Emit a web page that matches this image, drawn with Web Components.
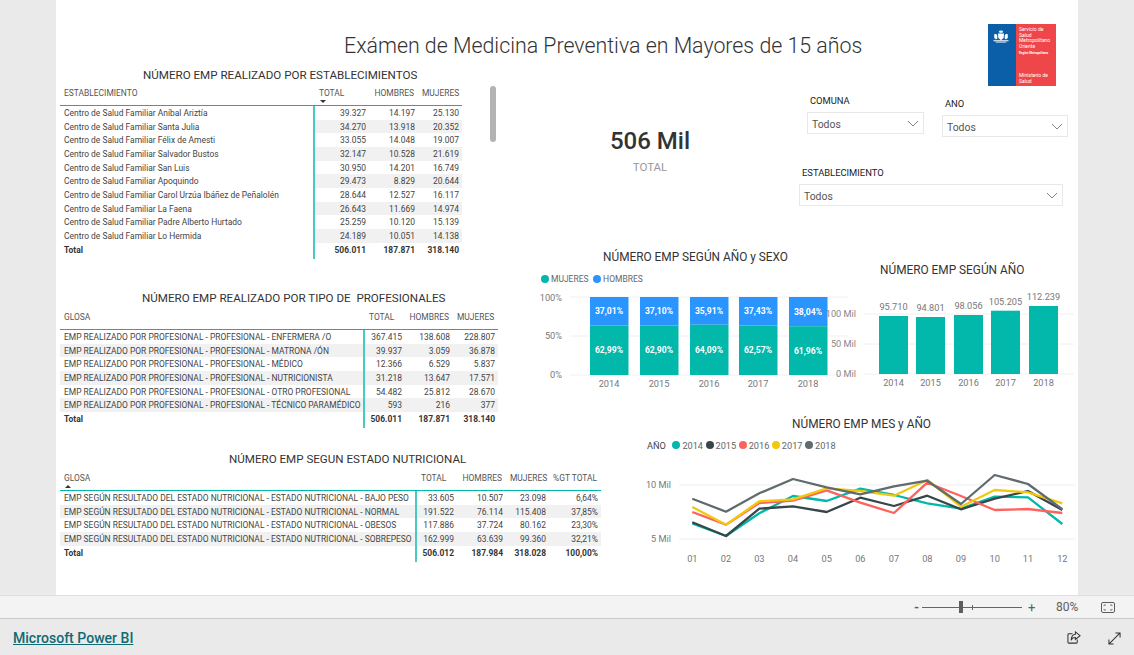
<!DOCTYPE html>
<html lang="es">
<head>
<meta charset="utf-8">
<title>Exámen de Medicina Preventiva</title>
<style>
  html, body { margin: 0; height: 100%; overflow: hidden; }
  body { font-family: Roboto, "Liberation Sans", sans-serif; }
</style>
</head>
<body>
<bi-app></bi-app>
<script>
const FONT = 'Roboto, "Liberation Sans", sans-serif';
const TEAL = "#01b8aa";

const TABLES = {
  estab: {
    cols: "255px 54px 49px 44px",
    stripeFrom: 1,
    head: ["ESTABLECIMIENTO", "TOTAL", "HOMBRES", "MUJERES"],
    headPad: [0, 23, 1, 4],
    sort: { col: 1, dir: "down" },
    rows: [
      ["Centro de Salud Familiar Aníbal Ariztía", "39.327", "14.197", "25.130"],
      ["Centro de Salud Familiar Santa Julia", "34.270", "13.918", "20.352"],
      ["Centro de Salud Familiar Félix de Amesti", "33.055", "14.048", "19.007"],
      ["Centro de Salud Familiar Salvador Bustos", "32.147", "10.528", "21.619"],
      ["Centro de Salud Familiar San Luis", "30.950", "14.201", "16.749"],
      ["Centro de Salud Familiar Apoquindo", "29.473", "8.829", "20.644"],
      ["Centro de Salud Familiar Carol Urzúa Ibáñez de Peñalolén", "28.644", "12.527", "16.117"],
      ["Centro de Salud Familiar La Faena", "26.643", "11.669", "14.974"],
      ["Centro de Salud Familiar Padre Alberto Hurtado", "25.259", "10.120", "15.139"],
      ["Centro de Salud Familiar Lo Hermida", "24.189", "10.051", "14.138"],
    ],
    total: ["Total", "506.011", "187.871", "318.140"],
  },
  prof: {
    cols: "305px 40px 48px 45px",
    stripeFrom: 0,
    head: ["GLOSA", "TOTAL", "HOMBRES", "MUJERES"],
    headPad: [0, 9, 1, 3],
    rows: [
      ["EMP REALIZADO POR PROFESIONAL - PROFESIONAL - ENFERMERA /O", "367.415", "138.608", "228.807"],
      ["EMP REALIZADO POR PROFESIONAL - PROFESIONAL - MATRONA /ÓN", "39.937", "3.059", "36.878"],
      ["EMP REALIZADO POR PROFESIONAL - PROFESIONAL - MÉDICO", "12.366", "6.529", "5.837"],
      ["EMP REALIZADO POR PROFESIONAL - PROFESIONAL - NUTRICIONISTA", "31.218", "13.647", "17.571"],
      ["EMP REALIZADO POR PROFESIONAL - PROFESIONAL - OTRO PROFESIONAL", "54.482", "25.812", "28.670"],
      ["EMP REALIZADO POR PROFESIONAL - PROFESIONAL - TÉCNICO PARAMÉDICO", "593", "216", "377"],
    ],
    total: ["Total", "506.011", "187.871", "318.140"],
  },
  nutri: {
    cols: "357px 40px 49px 43px 52px",
    stripeFrom: 0,
    head: ["GLOSA", "TOTAL", "HOMBRES", "MUJERES", "%GT TOTAL"],
    headPad: [0, 8, 1, 4, 2],
    sort: { col: 0, dir: "up" },
    rows: [
      ["EMP SEGÚN RESULTADO DEL ESTADO NUTRICIONAL - ESTADO NUTRICIONAL - BAJO PESO", "33.605", "10.507", "23.098", "6,64%"],
      ["EMP SEGÚN RESULTADO DEL ESTADO NUTRICIONAL - ESTADO NUTRICIONAL - NORMAL", "191.522", "76.114", "115.408", "37,85%"],
      ["EMP SEGÚN RESULTADO DEL ESTADO NUTRICIONAL - ESTADO NUTRICIONAL - OBESOS", "117.886", "37.724", "80.162", "23,30%"],
      ["EMP SEGÚN RESULTADO DEL ESTADO NUTRICIONAL - ESTADO NUTRICIONAL - SOBREPESO", "162.999", "63.639", "99.360", "32,21%"],
    ],
    total: ["Total", "506.012", "187.984", "318.028", "100,00%"],
  },
};

class BiTable extends HTMLElement {
  connectedCallback() {
    const data = TABLES[this.getAttribute("data-key")];
    const root = this.attachShadow({ mode: "open" });
    const headCells = data.head.map((h, i) => {
      const arrow = data.sort && data.sort.col === i ? `<i class="arrow ${data.sort.dir}"></i>` : "";
      return `<div class="hd ${i ? "num" : ""}" style="padding-right:${data.headPad[i] + 3}px">
        <span>${h}</span>${arrow}</div>`;
    }).join("");
    const bodyCells = data.rows.map((row, r) => row.map((c, i) => {
      const striped = r % 2 === 1 && i >= data.stripeFrom ? "stripe" : "";
      return `<div class="td ${i ? "num" : "first"} ${striped}">${c}</div>`;
    }).join("")).join("");
    const totalCells = data.total.map((c, i) => `<div class="td tot ${i ? "num" : "first"}">${c}</div>`).join("");
    root.innerHTML = `
      <style>
        :host { display: block; font-family: ${FONT}; }
        .title { height: var(--title-h, 18px); line-height: var(--title-h, 18px); font-size: 11.6px; color: #333;
                 padding-left: var(--title-left, 0); white-space: nowrap; }
        .grid { display: grid; grid-template-columns: ${data.cols}; grid-template-rows: 22px; grid-auto-rows: 13.66px;
                margin-left: 4px; width: max-content; }
        .hd { grid-row: 1; height: 22px; box-sizing: border-box; font-size: 8.45px; color: #555; white-space: nowrap;
              border-bottom: 1px solid ${TEAL}; padding: 3px 3px 0 4px; line-height: 12px; }
        .num { text-align: right; }
        .arrow { display: block; width: 0; height: 0; margin: 1px 0 0 1px; border: 3px solid transparent; }
        .arrow.down { border-top: 3px solid #333; border-bottom: 0; }
        .arrow.up { border-bottom: 3px solid #333; border-top: 0; }
        .td { font-size: 8.45px; line-height: 14.5px; color: #444; white-space: nowrap; padding: 0 3px 0 4px; }
        .stripe { background: #f1f1f1; }
        .first { border-right: 2px solid #45cbc0; box-sizing: border-box; }
        .tot { font-weight: 700; color: #333; line-height: 15px; height: 16px; }
      </style>
      <div class="title"><slot></slot></div>
      <div class="grid">${headCells}${bodyCells}${totalCells}</div>`;
  }
}

class BiSlicer extends HTMLElement {
  connectedCallback() {
    const root = this.attachShadow({ mode: "open" });
    root.innerHTML = `
      <style>
        :host { display: block; font-family: ${FONT}; }
        .lbl { font-size: 9.4px; color: #222; height: 12px; line-height: 12px; padding-left: 3px; white-space: nowrap; }
        .box { margin-top: 5px; height: 22px; box-sizing: border-box; border: 1px solid #e8e8e8;
               display: flex; align-items: center; justify-content: space-between; padding: 2px 4px 0;
               font-size: 10.4px; color: #555; }
        svg { display: block; margin-top: -2px; }
      </style>
      <div class="lbl"><slot name="label"></slot></div>
      <div class="box"><slot></slot>
        <svg width="12" height="7" viewBox="0 0 12 7"><path d="M1 1l5 5 5-5" fill="none" stroke="#777" stroke-width=".9"/></svg>
      </div>`;
  }
}

class BiKpi extends HTMLElement {
  connectedCallback() {
    const root = this.attachShadow({ mode: "open" });
    root.innerHTML = `
      <style>
        :host { display: block; text-align: center; font-family: ${FONT}; }
        .val { font-size: 24px; line-height: 30px; color: #333; font-weight: 500; }
        .cap { font-size: 11.5px; line-height: 16px; color: #999; margin-top: 3px; }
      </style>
      <div class="val">${this.getAttribute("value")}</div>
      <div class="cap">${this.getAttribute("caption")}</div>`;
  }
}

class BiLogo extends HTMLElement {
  connectedCallback() {
    const root = this.attachShadow({ mode: "open" });
    root.innerHTML = `
      <style>
        :host { display: flex; width: 68px; height: 62px; font-family: ${FONT}; }
        .blue { width: 28px; background: #0a5fa8; padding: 5px 0 0 4px; box-sizing: border-box; }
        .red { flex: 1; background: #ef4649; color: #fff; font-size: 5px; line-height: 5.5px; padding: 3px 0 2px 3px;
               display: flex; flex-direction: column; white-space: nowrap; }
        .small { font-size: 3px; margin-top: 2px; font-weight: 700; }
        .foot { margin-top: auto; }
        svg { display: block; }
      </style>
      <div class="blue">
        <svg width="18" height="15" viewBox="0 0 24 20">
          <path fill="#fff" d="M12 1l1 2 2-1-1 3h-4L9 2l2 1zM8 6h8l-.5 6-3.500 3-3.500-3zM3 7c2-1 4 0 4 2v4l-2 1-1-2-1 1V9zM21 7c-2-1-4 0-4 2v4l2 1 1-2 1 1V9zM2 15h20v1.200H2zM5 17h14v1H5z"/>
        </svg>
      </div>
      <div class="red">
        <span>Servicio de</span><span>Salud</span><span>Metropolitano</span><span>Oriente</span>
        <span class="small">Región Metropolitana</span>
        <span class="foot">Ministerio de</span><span>Salud</span>
      </div>`;
  }
}

class BiChart extends HTMLElement {
  // x0,y0 = where the svg starts on the page; keeps chart coordinates easy to read off the report
  frame(svgBody, x0, y0, w, h, legend) {
    const root = this.attachShadow({ mode: "open" });
    root.innerHTML = `
      <style>
        :host { display: block; font-family: ${FONT}; }
        .title { font-size: 11.85px; color: #333; white-space: nowrap; height: var(--title-h, 24px); line-height: 24px;
                 padding-left: var(--title-left, 0); padding-top: var(--title-top, 0); }
        .legend { display: flex; align-items: center; height: var(--legend-h, 20px); padding-left: var(--legend-left, 0);
                  padding-bottom: var(--legend-pb, 0); box-sizing: border-box;
                  font-size: var(--legend-size, 9.2px); color: #666; column-gap: 2.5px; white-space: nowrap; }
        .legend b { font-weight: 400; color: #444; margin-right: 4px; }
        .legend i { width: 8px; height: 8px; border-radius: 50%; display: inline-block; margin-right: 2px; }
        .legend span { display: inline-flex; align-items: center; }
        svg { display: block; overflow: visible; }
      </style>
      <div class="title"><slot></slot></div>
      ${legend || ""}
      <svg width="${w}" height="${h}" viewBox="${x0} ${y0} ${w} ${h}">${svgBody}</svg>`;
  }
}

class BiStackedChart extends BiChart {
  connectedCallback() {
    const years = [["2014", 325.5, "37,01%", "62,99%", 590], ["2015", 325.5, "37,10%", "62,90%", 640], ["2016", 324.7, "35,91%", "64,09%", 690], ["2017", 325.5, "37,43%", "62,57%", 739], ["2018", 326.2, "38,04%", "61,96%", 789]];
    const top = 297, bottom = 375;
    let s = "";
    [297, 336, 375].forEach((y) => { s += `<line x1="570" x2="848" y1="${y}" y2="${y}" stroke="#f0f0f0"/>`; });
    [["100%", 297.5], ["50%", 336], ["0%", 375]].forEach(([t, y]) => {
      s += `<text x="562" y="${y + 3}" text-anchor="end" font-size="9.2" fill="#777">${t}</text>`;
    });
    years.forEach(([yr, split, a, b, x]) => {
      s += `<rect x="${x}" y="${top}" width="38.5" height="${split - top}" fill="#2b95ff"/>`;
      s += `<rect x="${x}" y="${split}" width="38.5" height="${bottom - split}" fill="${TEAL}"/>`;
      s += `<text x="${x + 19}" y="${(top + split) / 2 + 3}" text-anchor="middle" font-size="8.6" font-weight="700" fill="#fff">${a}</text>`;
      s += `<text x="${x + 19}" y="${(split + bottom) / 2 + 3}" text-anchor="middle" font-size="8.6" font-weight="700" fill="#fff">${b}</text>`;
      s += `<text x="${x + 19}" y="386.5" text-anchor="middle" font-size="9.2" fill="#777">${yr}</text>`;
    });
    const legend = `<div class="legend"><span><i style="background:${TEAL}"></i>MUJERES</span>
      <span style="margin-left:2px"><i style="background:#2b95ff"></i>HOMBRES</span></div>`;
    this.frame(s, 536, 289, 324, 123, legend);
  }
}

class BiBarChart extends BiChart {
  connectedCallback() {
    const bars = [["2014", "95.710", 879, 316], ["2015", "94.801", 916, 317], ["2016", "98.056", 954, 315], ["2017", "105.205", 991, 310.7], ["2018", "112.239", 1029, 306]];
    let s = "";
    [314, 344, 374].forEach((y) => { s += `<line x1="864" x2="1074" y1="${y}" y2="${y}" stroke="#f0f0f0"/>`; });
    [["100 Mil", 314], ["50 Mil", 344], ["0 Mil", 374]].forEach(([t, y]) => {
      s += `<text x="856" y="${y + 3}" text-anchor="end" font-size="9.2" fill="#888">${t}</text>`;
    });
    bars.forEach(([yr, val, x, y]) => {
      s += `<rect x="${x}" y="${y}" width="29" height="${374 - y}" fill="${TEAL}"/>`;
      s += `<text x="${x + 14.5}" y="${y - 6}" text-anchor="middle" font-size="9.2" fill="#777">${val}</text>`;
      s += `<text x="${x + 14.5}" y="385.5" text-anchor="middle" font-size="9.2" fill="#777">${yr}</text>`;
    });
    this.frame(s, 860, 282, 218, 130);
  }
}

class BiLineChart extends BiChart {
  connectedCallback() {
    const xs = [187, 288, 388, 489, 590, 691, 792, 892, 993, 1094, 1194, 1297];
    const series = [
      [TEAL, [340, 378, 310, 258, 273, 236, 255, 280, 296, 260, 262, 342]],
      ["#374649", [337, 378, 296, 289, 306, 263, 288, 257, 298, 266, 243, 300]],
      ["#fd625e", [306, 344, 279, 272, 241, 278, 309, 218, 258, 300, 297, 309]],
      ["#f2c80f", [291, 344, 274, 268, 235, 243, 257, 210, 290, 240, 247, 280]],
      ["#5f6b6d", [266, 305, 250, 207, 232, 253, 229, 212, 282, 195, 222, 298]],
    ];
    let s = "";
    [[485, "10 Mil"], [539, "5 Mil"]].forEach(([y, t]) => {
      s += `<line x1="679" x2="1075" y1="${y}" y2="${y}" stroke="#eeeeee"/>`;
      s += `<text x="671" y="${y + 3}" text-anchor="end" font-size="9.2" fill="#777">${t}</text>`;
    });
    series.forEach(([color, ys]) => {
      const pts = ys.map((z, i) => `${(630 + xs[i] / 3).toFixed(1)},${(410 + z / 3).toFixed(1)}`).join(" ");
      s += `<polyline points="${pts}" fill="none" stroke="${color}" stroke-width="2.3" stroke-linejoin="round"/>`;
    });
    xs.forEach((z, i) => {
      const m = String(i + 1).padStart(2, "0");
      s += `<text x="${630 + z / 3}" y="562" text-anchor="middle" font-size="9.2" fill="#777">${m}</text>`;
    });
    const items = series.map(([c], i) => `<span><i style="background:${c}"></i>${2014 + i}</span>`).join("");
    const legend = `<div class="legend"><b>AÑO</b>${items}</div>`;
    this.frame(s, 610, 456, 468, 124, legend);
  }
}

class BiZoomBar extends HTMLElement {
  connectedCallback() {
    const root = this.attachShadow({ mode: "open" });
    root.innerHTML = `
      <style>
        :host { display: flex; align-items: center; justify-content: flex-end; height: 24px; box-sizing: border-box;
                background: #f3f3f3; border-top: 1px solid #dedede; border-bottom: 1px solid #c8c8c8;
                font-family: ${FONT}; color: #605e5c; padding-right: 19px; }
        .minus { font-size: 13px; font-weight: 700; width: 9px; }
        .track { width: 100px; height: 1px; background: #666; position: relative; margin-left: -1px; margin-right: 6px; }
        .thumb { position: absolute; left: 37px; top: -6px; width: 4px; height: 12px; background: #605e5c; }
        .tick { position: absolute; left: 50px; top: -2px; width: 1px; height: 5px; background: #666; }
        .plus { font-size: 13px; width: 12px; }
        .pct { font-size: 12px; margin-left: 16px; width: 23px; }
        svg { display: block; margin-left: 22px; }
      </style>
      <span class="minus">-</span>
      <div class="track"><div class="thumb"></div><div class="tick"></div></div>
      <span class="plus">+</span>
      <span class="pct">80%</span>
      <svg width="14" height="11" viewBox="0 0 14 11" fill="none" stroke="#605e5c">
        <rect x=".5" y=".5" width="13" height="10" rx="1.5"/>
        <path d="M3 4V3h2M11 4V3H9M3 7v1h2M11 7v1H9" stroke-width=".8"/>
      </svg>`;
  }
}

class BiFooter extends HTMLElement {
  connectedCallback() {
    const root = this.attachShadow({ mode: "open" });
    root.innerHTML = `
      <style>
        :host { display: flex; align-items: center; height: 36px; background: #eaeaea; font-family: ${FONT};
                padding: 2px 13px 0 13px; box-sizing: border-box; }
        a { color: #0f6b74; font-size: 14.05px; font-weight: 500; text-decoration: underline; white-space: nowrap; }
        .right { margin-left: auto; display: flex; column-gap: 27px; align-items: center; }
        svg { display: block; }
      </style>
      <a href="#">Microsoft Power BI</a>
      <div class="right">
        <svg width="14" height="14" viewBox="0 0 15 15" fill="none" stroke="#333" stroke-width="1.1">
          <path d="M6 3H2a1 1 0 0 0-1 1v8a1 1 0 0 0 1 1h8a1 1 0 0 0 1-1V9"/>
          <path d="M9 1l5 4-5 4V7C7 7 5 8 4.5 10 4.5 6.5 6 4 9 3.5z"/>
        </svg>
        <svg width="13" height="13" viewBox="0 0 14 14" fill="none" stroke="#333" stroke-width="1.1">
          <path d="M13 1L1 13M8 1h5v5M1 8v5h5"/>
        </svg>
      </div>`;
  }
}

class BiApp extends HTMLElement {
  connectedCallback() {
    const root = this.attachShadow({ mode: "open" });
    root.innerHTML = `
      <style>
        :host { display: flex; flex-direction: column; width: 1134px; height: 655px; background: #eaeaea;
                font-family: ${FONT}; overflow: hidden; }
        .canvas { flex: none; width: 1022px; height: 595px; margin-left: 56px; background: #fff; display: grid;
                  grid-template-columns: 480px 74px 250px 218px;
                  grid-template-rows: 66px 24px 155px 43px 124px 38px 145px; }
        .title { grid-column: 1 / -1; grid-row: 1; font-size: 21.35px; font-weight: 300; color: #333; padding: 32px 0 0 288px; white-space: nowrap; line-height: 28px; }
        .logo { grid-column: 4; grid-row: 1 / 3; justify-self: start; margin: 24px 0 0 128px; }
        .t1 { grid-column: 1; grid-row: 2 / 5; --title-left: 87px; }
        .t2 { grid-column: 1; grid-row: 5 / 6; --title-left: 86px; --title-h: 20px; }
        .t3 { grid-column: 1 / 3; grid-row: 7; --title-left: 173px; --title-h: 20px; margin-top: -1px; }
        .scroll { grid-column: 1; grid-row: 2 / 4; justify-self: start; width: 6px; height: 56px; margin: 20px 0 0 434px;
                  background: #b3b3b3; border-radius: 3px; }
        .top { grid-column: 2 / 5; grid-row: 3; display: grid; grid-template-columns: 264px 1fr; }
        .kpi { padding-top: 36px; margin-left: 30px; width: 168px; }
        .slicers { display: grid; grid-template-columns: 117px 126px; column-gap: 18px; align-content: start;
                   margin-left: 7px; padding-top: 5px; }
        .s2 { margin-top: 3px; }
        .s3 { grid-column: 1 / -1; width: 264px; margin: 30px 0 0 -8px; }
        .c1 { grid-column: 2 / 4; grid-row: 4 / 6; --title-left: 67px; --legend-left: 5px; --legend-size: 8.5px; --legend-pb: 1px; }
        .c2 { grid-column: 4; grid-row: 4 / 6; --title-left: 20px; --title-top: 13px; }
        .c3 { grid-column: 3 / 5; grid-row: 6 / 8; --title-left: 182px; --title-h: 22px; --legend-h: 22px; --legend-left: 37px; }
      </style>
      <div class="canvas">
        <div class="title">Exámen de Medicina Preventiva en Mayores de 15 años</div>
        <bi-logo class="logo"></bi-logo>
        <bi-table class="t1" data-key="estab">NÚMERO EMP REALIZADO POR ESTABLECIMIENTOS</bi-table>
        <div class="scroll"></div>
        <bi-table class="t2" data-key="prof">NÚMERO EMP REALIZADO POR TIPO DE&nbsp; PROFESIONALES</bi-table>
        <bi-table class="t3" data-key="nutri">NÚMERO EMP SEGUN ESTADO NUTRICIONAL</bi-table>
        <div class="top">
          <bi-kpi class="kpi" value="506 Mil" caption="TOTAL"></bi-kpi>
          <div class="slicers">
            <bi-slicer><span slot="label">COMUNA</span>Todos</bi-slicer>
            <bi-slicer class="s2"><span slot="label">ANO</span>Todos</bi-slicer>
            <bi-slicer class="s3"><span slot="label">ESTABLECIMIENTO</span>Todos</bi-slicer>
          </div>
        </div>
        <bi-stacked-chart class="c1">NÚMERO EMP SEGÚN AÑO y SEXO</bi-stacked-chart>
        <bi-bar-chart class="c2">NÚMERO EMP SEGÚN AÑO</bi-bar-chart>
        <bi-line-chart class="c3">NÚMERO EMP MES y AÑO</bi-line-chart>
      </div>
      <bi-zoom-bar></bi-zoom-bar>
      <bi-footer></bi-footer>`;
  }
}

customElements.define("bi-table", BiTable);
customElements.define("bi-slicer", BiSlicer);
customElements.define("bi-kpi", BiKpi);
customElements.define("bi-logo", BiLogo);
customElements.define("bi-stacked-chart", BiStackedChart);
customElements.define("bi-bar-chart", BiBarChart);
customElements.define("bi-line-chart", BiLineChart);
customElements.define("bi-zoom-bar", BiZoomBar);
customElements.define("bi-footer", BiFooter);
customElements.define("bi-app", BiApp);
</script>
</body>
</html>
